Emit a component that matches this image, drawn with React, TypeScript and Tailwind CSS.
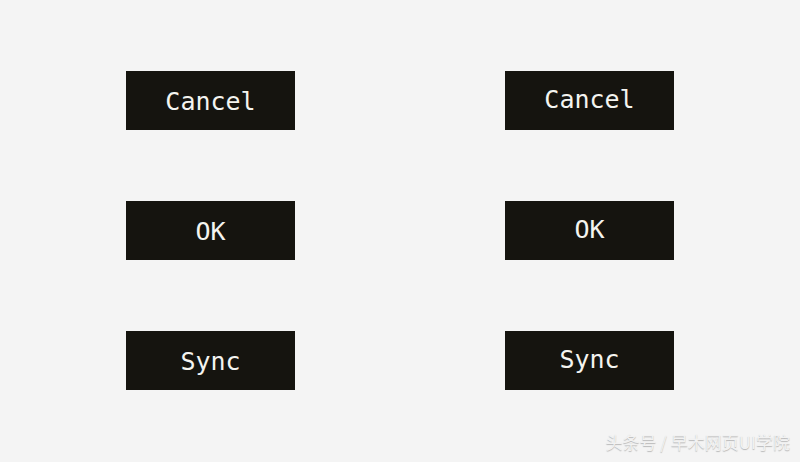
import React from 'react';

const labels = ['Cancel', 'OK', 'Sync'];

const Btn: React.FC<{ label: string; lift?: boolean }> = ({ label, lift }) => (
  <div className="w-[169px] h-[59px] bg-[#15140f] flex items-center justify-center">
    <span
      className={`text-[25px] text-[#f4f4f0] leading-none ${lift ? '-mt-[2px]' : 'mt-[2px]'}`}
      style={{ fontFamily: '"DejaVu Sans Mono", "Liberation Mono", monospace' }}
    >
      {label}
    </span>
  </div>
);

export default function App() {
  return (
    <div className="relative w-[800px] h-[462px] bg-[#f4f4f4] overflow-hidden">
      <div className="flex gap-[210px] pl-[126px] pt-[71px]">
        <div className="flex flex-col gap-[71px]">
          {labels.map((l) => (
            <Btn key={l} label={l} />
          ))}
        </div>
        <div className="flex flex-col gap-[71px]">
          {labels.map((l) => (
            <Btn key={l} label={l} lift />
          ))}
        </div>
      </div>
      {/* watermark */}
      <div
        className="absolute right-[10px] bottom-[8px] text-[17px] text-[#f2f2f2] [text-shadow:0_1px_1px_rgba(0,0,0,0.25)]"
        style={{ fontFamily: '"Noto Sans CJK SC", "Noto Sans", sans-serif' }}
      >
        头条号 / 早木网页UI学院
      </div>
    </div>
  );
}
